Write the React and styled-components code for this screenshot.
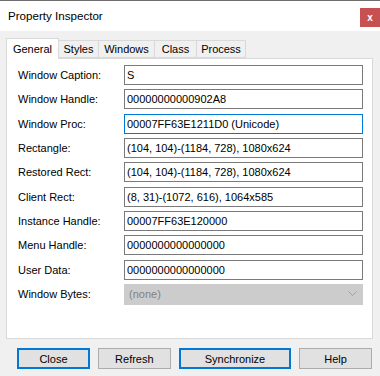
import styled, {createGlobalStyle} from 'styled-components';
import {Fragment} from 'react';

const GlobalStyle = createGlobalStyle`
  html, body {
    margin: 0;
    padding: 0;
    background: #f0f0f0;
  }
  * {
    box-sizing: border-box;
  }
`

let Window = styled.div`
  width: 380px;
  height: 376px;
  display: flex;
  flex-direction: column;
  background-color: #f0f0f0;
  font-family: "Liberation Sans", Arial, sans-serif;
  font-size: 11px;
  color: #000;
  overflow: hidden;
`

let TitleBar = styled.div`
  height: 31px;
  flex-shrink: 0;
  display: flex;
  align-items: flex-start;
  justify-content: space-between;
  background-color: #ffffff;
  border-top: 1px solid #6e6e6e;
`

let Title = styled.span`
  margin-top: 8px;
  margin-left: 8px;
  font-size: 11.6px;
  line-height: 14px;
`

let CloseBox = styled.div`
  width: 20px;
  height: 19px;
  margin-top: 7px;
  display: flex;
  align-items: center;
  justify-content: center;
  background-color: #c75050;
  color: #ffffff;
  font-weight: bold;
  font-size: 10px;
  line-height: 1;
`

let Body = styled.div`
  flex: 1;
  display: flex;
  flex-direction: column;
  padding: 7px 8px 0 6px;
`

let TabStrip = styled.div`
  display: flex;
  align-items: flex-end;
  height: 20px;
  position: relative;
  z-index: 1;
`

let Tab = styled.div`
  height: ${p => (p.active ? 21 : 18)}px;
  width: ${p => p.w}px;
  margin-bottom: ${p => (p.active ? -1 : 0)}px;
  display: flex;
  align-items: center;
  justify-content: center;
  padding-bottom: ${p => (p.active ? 1 : 0)}px;
  background-color: ${p => (p.active ? '#ffffff' : '#f0f0f0')};
  border: 1px solid #d9d9d9;
  border-bottom: ${p => (p.active ? 'none' : '1px solid #d9d9d9')};
  border-left: ${p => (p.first ? '1px solid #d9d9d9' : 'none')};
`

let Panel = styled.div`
  width: 367px;
  height: 281px;
  background-color: #ffffff;
  border: 1px solid #d9d9d9;
  padding: 6px 9px 0 11px;
`

let FieldGrid = styled.div`
  display: grid;
  grid-template-columns: 106px 1fr;
  grid-auto-rows: 20px;
  row-gap: 4.33px;
`

let Label = styled.div`
  display: flex;
  align-items: center;
`

let TextBox = styled.div`
  display: flex;
  align-items: center;
  padding-left: 2px;
  background-color: #ffffff;
  border: 1px solid ${p => (p.focused ? '#0078d7' : '#7a7a7a')};
  white-space: nowrap;
  overflow: hidden;
`

let Combo = styled.div`
  height: 21px;
  display: flex;
  align-items: center;
  justify-content: space-between;
  padding: 0 5px 0 4px;
  background-color: #cccccc;
  border: 1px solid #cccccc;
  color: #838383;
`

let ButtonRow = styled.div`
  display: flex;
  gap: 8px;
  padding-top: 9px;
  padding-left: 11px;
`

let Button = styled.div`
  width: ${p => p.w}px;
  height: 21px;
  display: flex;
  align-items: center;
  justify-content: center;
  background-color: #e1e1e1;
  border: ${p => (p.def ? '2px solid #0078d7' : '1px solid #adadad')};
`

const tabs = [
  {name: 'General', w: 53},
  {name: 'Styles', w: 40},
  {name: 'Windows', w: 56},
  {name: 'Class', w: 42},
  {name: 'Process', w: 49},
]

const fields = [
  ['Window Caption:', 'S'],
  ['Window Handle:', '00000000000902A8'],
  ['Window Proc:', '00007FF63E1211D0 (Unicode)', true],
  ['Rectangle:', '(104, 104)-(1184, 728), 1080x624'],
  ['Restored Rect:', '(104, 104)-(1184, 728), 1080x624'],
  ['Client Rect:', '(8, 31)-(1072, 616), 1064x585'],
  ['Instance Handle:', '00007FF63E120000'],
  ['Menu Handle:', '0000000000000000'],
  ['User Data:', '0000000000000000'],
]

function App() {
  return (
    <>
      <GlobalStyle/>
      <Window>
        <TitleBar>
          <Title>Property Inspector</Title>
          <CloseBox>x</CloseBox>
        </TitleBar>
        <Body>
          <TabStrip>
            {tabs.map((t, i) => (
              <Tab key={t.name} w={t.w} active={i === 0} first={i === 0}>{t.name}</Tab>
            ))}
          </TabStrip>
          <Panel>
            <FieldGrid>
              {fields.map(([label, value, focused]) => (
                <Fragment key={label}>
                  <Label>{label}</Label>
                  <TextBox focused={focused}>{value}</TextBox>
                </Fragment>
              ))}
              <Label>Window Bytes:</Label>
              <Combo>
                <span>(none)</span>
                <svg width="9" height="6" viewBox="0 0 9 6">
                  <path d="M0.5 0.5 L4.5 4.5 L8.5 0.5" fill="none" stroke="#a0a0a0" strokeWidth="1"/>
                </svg>
              </Combo>
            </FieldGrid>
          </Panel>
          <ButtonRow>
            <Button w={74} def>Close</Button>
            <Button w={74}>Refresh</Button>
            <Button w={114} def>Synchronize</Button>
            <Button w={74}>Help</Button>
          </ButtonRow>
        </Body>
      </Window>
    </>
  )
}

export default App;
